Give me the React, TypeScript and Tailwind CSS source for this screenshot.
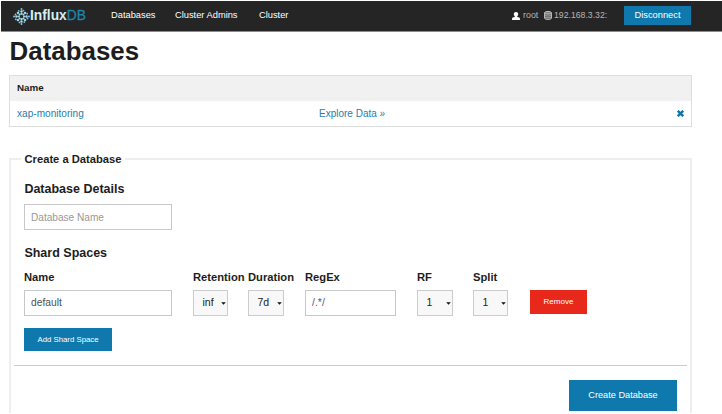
import { ReactNode } from 'react';

const rays = [0, 45, 90, 135, 180, 225, 270, 315];

function Burst() {
  return (
    <svg className="h-[17px] w-[17px] shrink-0" viewBox="-8 -8 16 16">
      {rays.map((a) => (
        <g key={a} transform={`rotate(${a})`} fill="#a5dcec">
          <circle cy="-2.5" r="1" />
          <circle cy="-4.7" r="1.15" />
          <circle cx="1.9" cy="-5.6" r=".85" fill="#7cc6dd" />
          {a % 90 === 0 && <circle cy="-7" r=".95" fill="#7cc6dd" />}
        </g>
      ))}
    </svg>
  );
}

function UserIcon() {
  return (
    <svg className="ml-[200px] h-[8px] w-[8px] shrink-0" viewBox="0 0 8 8" fill="#fff">
      <path d="M4 0C5.6 0 6.3 1 6.2 2.3 6.1 3.4 5.6 4 5.2 4.4V5L7.4 5.5Q8 5.8 8 8H0Q0 5.8 .6 5.5L2.8 5V4.4C2.4 4 1.9 3.4 1.8 2.3 1.7 1 2.4 0 4 0Z" />
    </svg>
  );
}

function DatabaseIcon() {
  return (
    <svg className="h-[9px] w-[8px] shrink-0" viewBox="0 0 8 9" fill="none" stroke="#c4c4c4">
      <path d="M.6 1.8V7.2C.6 8.8 7.4 8.8 7.4 7.2V1.8" fill="#555" />
      <ellipse cx="4" cy="1.8" rx="3.4" ry="1.3" fill="#777" />
      <path d="M.6 4.2C1.5 5.3 6.5 5.3 7.4 4.2M.6 6C1.5 7.1 6.5 7.1 7.4 6" strokeWidth=".7" />
    </svg>
  );
}

function Column({ label, className, children }: { label: string; className: string; children?: ReactNode }) {
  return (
    <div className={`shrink-0 ${className}`}>
      <div className="h-[20px] text-[11.2px] leading-[14px] font-bold whitespace-nowrap">{label}</div>
      {children}
    </div>
  );
}

function Select({ value, className }: { value: string; className: string }) {
  return (
    <div className={`flex h-[26px] items-center justify-between border border-[#ccc] bg-[#f8f8f8] pr-[1px] pl-[8.5px] text-[10.5px] text-[#222] ${className}`}>
      <span>{value}</span>
      <svg className="h-[3px] w-[5px]" viewBox="0 0 5 3" fill="#111">
        <path d="M.2.3H4.8L2.5 2.8Z" />
      </svg>
    </div>
  );
}

export default function App() {
  return (
    <div className="h-[413px] w-[722px] overflow-hidden bg-white pt-px font-['Liberation_Sans',Arial,sans-serif] text-[#1d1d1d]">
      <header className="ml-px flex h-[31px] items-center border-b border-[#8c8c8c] bg-[#252525] text-[9.3px] whitespace-nowrap text-white">
        <div className="ml-[12px] flex w-[98px] shrink-0 items-center">
          <Burst />
          <span className="text-[13.8px] leading-none font-bold text-[#d3f0f6]">Influx</span>
          <span className="text-[13.8px] leading-none text-[#1e83ae] [-webkit-text-stroke:0.3px_#1e83ae]">DB</span>
        </div>
        <nav className="flex w-[212px] shrink-0">
          <a className="w-[64px]">Databases</a>
          <a className="w-[84px]">Cluster Admins</a>
          <a>Cluster</a>
        </nav>
        <div className="-ml-[11px] flex w-[312px] shrink-0 items-center text-[#b5b5b5]">
          <UserIcon />
          <span className="ml-[3px] w-[20.5px] text-[8.9px]">root</span>
          <DatabaseIcon />
          <span className="ml-[2.5px] text-[8.7px]">192.168.3.32:</span>
        </div>
        <button className="-mt-[1px] h-[19px] w-[67px] shrink-0 bg-[#0f79ad] text-[9.3px]">Disconnect</button>
      </header>

      <main className="ml-[9px] w-[683px]">
        <h1 className="h-[43px] pt-[5px] pl-[0.6px] text-[25.9px] leading-[28px] font-bold">Databases</h1>

        <section className="h-[52px] border border-[#dedede] text-[10.1px]">
          <div className="flex h-[25px] items-center bg-[#f1f1f1] pl-[7px] text-[9.8px] font-bold">Name</div>
          <div className="flex h-[25px] items-center pr-[7.5px] pl-[7px] text-[#2a7cab]">
            <a className="w-[302px]">xap-monitoring</a>
            <a className="text-[10px]">Explore Data »</a>
            <svg className="ml-auto h-[7px] w-[7px]" viewBox="0 0 7 7" stroke="#0f75aa" strokeWidth="2.4">
              <path d="M.8.8 6.2 6.2M6.2.8.8 6.2" />
            </svg>
          </div>
        </section>

        <fieldset className="mt-[25px] h-[280px] border-2 border-b-0 border-[#eeeeee]">
          <legend className="ml-[10px] h-[14px] pr-[3px] pl-[3.5px] text-[11.2px] leading-[14px] font-bold">Create a Database</legend>
          <div className="ml-[13px]">
            <h2 className="mt-[16px] h-[22px] pl-[0.4px] text-[12.5px] leading-[14px] font-bold">Database Details</h2>
            <div className="flex h-[26px] w-[148px] items-center border border-[#c8c8c8] pt-px pl-[6px] text-[10.1px] text-[#999]">
              Database Name
            </div>
            <h2 className="mt-[16px] h-[24px] pl-[0.4px] text-[12.5px] leading-[14px] font-bold">Shard Spaces</h2>
            <div className="flex">
              <Column label="Name" className="w-[169px]">
                <div className="flex h-[26px] w-[148px] items-center border border-[#c8c8c8] pl-[6px] text-[10.3px] text-[#505050]">
                  default
                </div>
              </Column>
              <Column label="Retention" className="w-[55px]">
                <Select value="inf" className="w-[35px]" />
              </Column>
              <Column label="Duration" className="w-[57px]">
                <Select value="7d" className="w-[36px]" />
              </Column>
              <Column label="RegEx" className="w-[112px]">
                <div className="flex h-[26px] w-[91px] items-center border border-[#c8c8c8] pl-[6px] text-[10.5px] text-[#606060]">
                  /.*/
                </div>
              </Column>
              <Column label="RF" className="w-[56px]">
                <Select value="1" className="w-[36px]" />
              </Column>
              <Column label="Split" className="w-[57px]">
                <Select value="1" className="w-[35px]" />
              </Column>
              <Column label="" className="w-[58px]">
                <button className="block h-[24px] w-[57px] bg-[#e9281c] text-[8px] text-white">Remove</button>
              </Column>
            </div>
            <button className="mt-[12px] block h-[23px] w-[88px] bg-[#0f79ad] text-[7.8px] text-white">Add Shard Space</button>
          </div>
          <div className="mt-[14px] ml-[3px] flex h-[50px] w-[673px] justify-end border-t border-[#ccc] pt-[14px] pr-[10px]">
            <button className="h-[31px] w-[108px] bg-[#0f79ad] text-[9.2px] text-white">Create Database</button>
          </div>
        </fieldset>
      </main>
    </div>
  );
}
